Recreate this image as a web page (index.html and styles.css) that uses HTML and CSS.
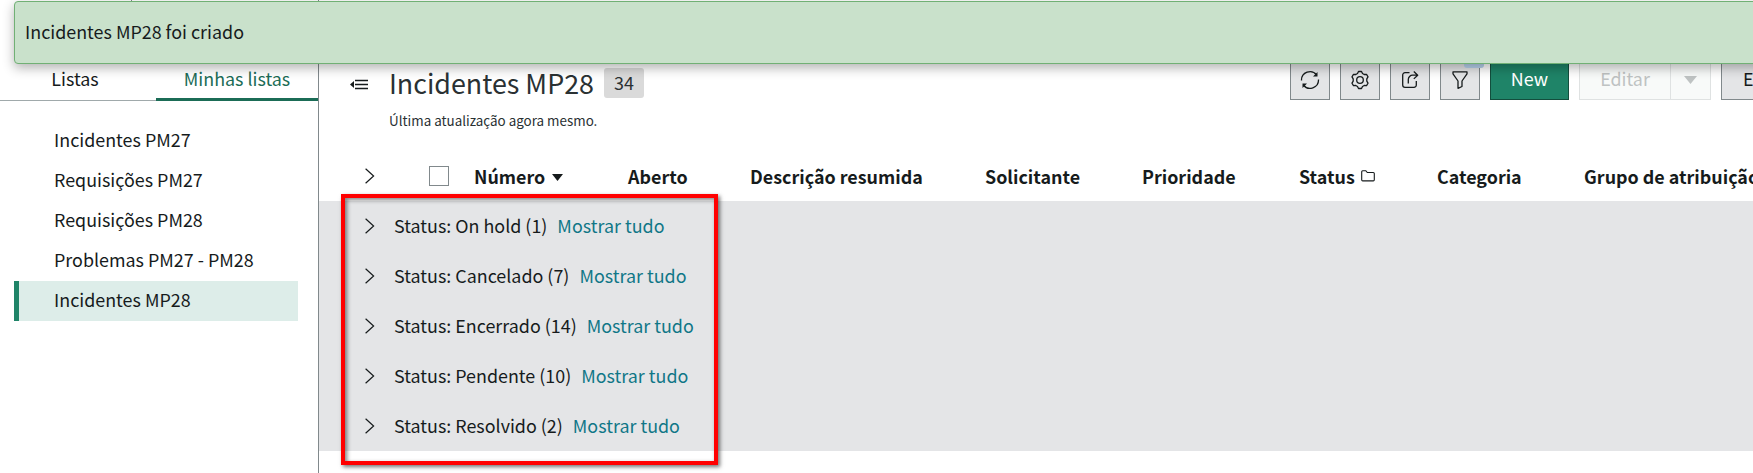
FILE: index.html
```html
<!DOCTYPE html>
<html lang="pt-BR">
<head>
<meta charset="utf-8">
<title>Incidentes MP28</title>
<link rel="stylesheet" href="styles.css">
</head>
<body>
<svg class="defs" width="0" height="0">
  <symbol id="chevron" viewBox="0 0 10 16"><path d="M.6 .8 8.600 8 .6 15.200" fill="none" stroke="#161b1c" stroke-width="1.2"/></symbol>
</svg>
<div class="app">
  <aside class="sidebar">
    <nav class="tabs">
      <a class="tab">Listas</a>
      <a class="tab active">Minhas listas</a>
    </nav>
    <ul class="lists">
      <li>Incidentes PM27</li>
      <li>Requisições PM27</li>
      <li>Requisições PM28</li>
      <li>Problemas PM27 - PM28</li>
      <li class="selected">Incidentes MP28</li>
    </ul>
  </aside>
  <main class="content">
    <header class="header">
      <svg class="collapse" width="18" height="13" viewBox="0 0 18 13"><path d="M0 6.500 4 3v7z" fill="#161b1c"/><path d="M5 2.500h13M5 6.500h13M5 10.500h13" stroke="#161b1c" stroke-width="1.300"/></svg>
      <div class="heading">
        <div class="title-row"><h1>Incidentes MP28</h1><span class="count">34</span></div>
        <p class="updated">Última atualização agora mesmo.</p>
      </div>
      <div class="toolbar">
        <button class="btn icon"><svg width="20" height="20" viewBox="0 0 20 20"><path d="M1.500 10.500A8.500 8.500 0 0 1 16.700 5M18.500 9.500A8.500 8.500 0 0 1 3.300 15"/><path class="solid" d="M17.500 2v4.500h-4.500zM2.500 18v-4.500h4.500z"/></svg></button>
        <button class="btn icon"><svg width="20" height="20" viewBox="0 0 20 20"><path d="M7.500 3.500 8.500 1.500h3l1 2 1.700 1 2.300-.200 1.500 2.600-1.200 2v2.200l1.200 2-1.500 2.600-2.300-.2-1.700 1-1 2h-3l-1-2-1.700-1-2.300.2-1.500-2.600 1.200-2V8.900L2 6.900l1.500-2.600 2.300.2z"/><circle cx="10" cy="10" r="3.300"/></svg></button>
        <button class="btn icon"><svg width="20" height="20" viewBox="0 0 20 20"><path d="M9.500 2.700H5A2.300 2.300 0 0 0 2.700 5v10A2.300 2.300 0 0 0 5 17.300h9a2.300 2.300 0 0 0 2.300-2.300v-4"/><path d="M8.300 13.500V9.500A4.300 4.300 0 0 1 12.600 5.200H17.500M13.800 1.500l3.900 3.700-3.900 3.700"/></svg></button>
        <button class="btn icon filter"><svg width="20" height="20" viewBox="0 0 20 20"><path d="M3 1.800h14v2L12 11v5.500L8 18.300V11L3 3.800z"/></svg><span class="dot"></span></button>
        <button class="btn primary">New</button>
        <div class="split"><button class="btn edit">Editar</button><button class="btn drop"><svg width="13" height="8" viewBox="0 0 13 8"><path d="M0 0h13L6.500 8z" fill="#bfc3c3"/></svg></button></div>
        <button class="btn export">Exportar</button>
      </div>
    </header>
    <div class="columns">
      <svg class="chev" width="10" height="16"><use href="#chevron"/></svg>
      <span class="check"></span>
      <span>Número<svg class="sort" width="11" height="7" viewBox="0 0 11 7"><path d="M0 0h11L5.500 7z" fill="#161b1c"/></svg></span>
      <span>Aberto</span>
      <span>Descrição resumida</span>
      <span>Solicitante</span>
      <span>Prioridade</span>
      <span>Status<svg class="folder" width="14" height="12" viewBox="0 0 14 12"><path d="M.700 9.800V1.700Q.700.700 1.700.700H4.800L6.300 2.500H12.300Q13.300 2.500 13.300 3.500V9.800Q13.300 10.900 12.300 10.900H1.700Q.700 10.900.700 9.800z" fill="none" stroke="#161b1c" stroke-width="1.100"/></svg></span>
      <span>Categoria</span>
      <span>Grupo de atribuição</span>
    </div>
    <div class="groups">
      <div class="group"><svg class="chev" width="10" height="16"><use href="#chevron"/></svg><span>Status: On hold (1)</span><a>Mostrar tudo</a></div>
      <div class="group"><svg class="chev" width="10" height="16"><use href="#chevron"/></svg><span>Status: Cancelado (7)</span><a>Mostrar tudo</a></div>
      <div class="group"><svg class="chev" width="10" height="16"><use href="#chevron"/></svg><span>Status: Encerrado (14)</span><a>Mostrar tudo</a></div>
      <div class="group"><svg class="chev" width="10" height="16"><use href="#chevron"/></svg><span>Status: Pendente (10)</span><a>Mostrar tudo</a></div>
      <div class="group"><svg class="chev" width="10" height="16"><use href="#chevron"/></svg><span>Status: Resolvido (2)</span><a>Mostrar tudo</a></div>
    </div>
  </main>
</div>
<div class="tick"></div>
<div class="banner">Incidentes MP28 foi criado</div>
<div class="highlight"></div>
</body>
</html>
```

FILE: styles.css
```css
* { box-sizing: border-box; }
body {
  margin: 0;
  width: 1753px;
  height: 473px;
  overflow: hidden;
  position: relative;
  background: #fff;
  color: #161b1c;
  font: 400 17.9px/26px "Noto Sans CJK SC", "Noto Sans", sans-serif;
}
.defs { position: absolute; }
.app { display: flex; height: 473px; }

.sidebar { width: 319px; flex: none; border-right: 1px solid #81898c; }
.tabs { display: flex; height: 101px; }
.tab {
  width: 156px;
  padding: 65px 6px 0 0;
  text-align: center;
  border-bottom: 1px solid #a0a9ab;
}
.tab.active {
  width: 162px;
  padding: 65px 0 0 0;
  color: #1b6c56;
  border-bottom: 3px solid #1b6c56;
}
.lists { list-style: none; margin: 20px 20px 0 14px; padding: 0; }
.lists li { height: 40px; padding: 5px 0 0 40px; }
.lists .selected {
  padding-left: 35px;
  border-left: 5px solid #1f8468;
  background: #ddede9;
}

.content { width: 1434px; flex: none; overflow: hidden; }
.header { display: flex; height: 151px; padding: 60px 0 0 31px; }
.collapse { margin: 18px 21px 0 0; flex: none; }
.heading { width: 901px; flex: none; }
.title-row { display: flex; align-items: flex-start; height: 46px; }
h1 { margin: 3px 10px 0 0; width: 205px; font-size: 26.85px; line-height: 40px; font-weight: 400; color: #2a3133; white-space: nowrap; }
.count {
  width: 40px;
  height: 30px;
  margin-top: 8px;
  line-height: 29px;
  text-align: center;
  border-radius: 3px;
  background: #dadada;
  color: #2a3133;
}
.updated { margin: 3px 0 0; font-size: 13.42px; line-height: 22px; color: #2a3133; }

.toolbar { display: flex; gap: 10px; height: 40px; }
.btn {
  height: 40px;
  flex: none;
  padding: 0 0 4px;
  border: 1px solid #81898c;
  background: #e4e5e7;
  color: #161b1c;
  font: inherit;
}
.icon { width: 40px; padding: 0; position: relative; display: flex; align-items: center; justify-content: center; }
.icon svg { fill: none; stroke: #161b1c; stroke-width: 1.3; stroke-linejoin: round; }
.icon .solid { fill: #161b1c; stroke: none; }
.dot { position: absolute; right: -5px; top: -12px; width: 20px; height: 19px; border-radius: 3px; background: #b9d3ee; }
.primary { width: 79px; background: #1f8468; border-color: #134e3d; color: #fff; }
.split { display: flex; }
.edit, .drop { background: #f8faf9; border-color: #dfe2e2; color: #bfc3c3; }
.edit { width: 91px; border-right: 0; }
.drop { width: 41px; padding: 0; display: flex; align-items: center; justify-content: center; }
.export { width: 110px; padding-left: 21px; text-align: left; }

.columns {
  display: grid;
  grid-template-columns: 64px 46px 153px 122px 235px 157px 157px 138px 147px 200px;
  height: 50px;
  padding: 12px 0 0 46px;
  font-weight: 700;
  white-space: nowrap;
}
.columns .chev { margin-top: 5px; }
.columns > :nth-child(3) { margin-left: -1px; }
.check { width: 20px; height: 20px; margin-top: 3px; border: 1px solid #81898c; }
.sort { margin-left: 7px; vertical-align: 3px; }
.folder { margin-left: 6px; vertical-align: 2px; }

.groups { background: #e4e5e7; height: 250px; }
.group { display: flex; height: 50px; padding: 11px 0 0 46px; }
.group .chev { margin: 6px 19px 0 0; }
.group a { margin-left: 10px; color: #107787; }

.tick { position: absolute; left: 131px; top: 0; width: 1px; height: 3px; background: #81898c; }
.banner {
  position: absolute;
  left: 14px;
  top: 1px;
  width: 1760px;
  height: 63px;
  padding: 16px 10px;
  border: 1px solid #71b075;
  border-radius: 4px;
  background: #c9e1cb;
  box-shadow: 0 4px 12px rgba(0, 0, 0, .3);
}
.highlight {
  position: absolute;
  left: 341px;
  top: 194px;
  width: 377px;
  height: 271px;
  border: 4px solid #f00;
  box-shadow: 2px 2px 4px rgba(0, 0, 0, .55), inset 2px 2px 4px rgba(0, 0, 0, .5);
}
```
